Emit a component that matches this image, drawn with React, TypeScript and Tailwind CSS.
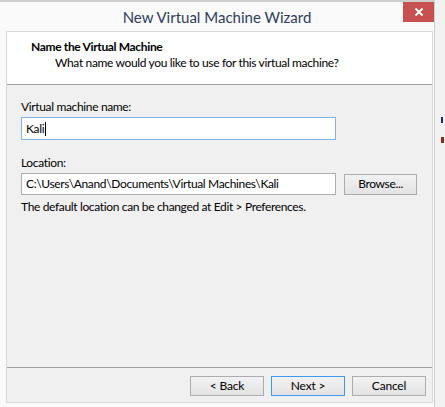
import React from "react";

const font = { fontFamily: '"Segoe UI", Lato, "Liberation Sans", sans-serif' };

function Btn({ children, primary }: { children: React.ReactNode; primary?: boolean }) {
  return (
    <div
      className={
        "flex h-[20px] w-[74px] items-center justify-center border text-[12px] tracking-[-0.2px] text-[#000] bg-gradient-to-b from-[#f2f2f2] to-[#e3e3e3] " +
        (primary ? "border-[#3c9bf0]" : "border-[#acacac]")
      }
    >
      {children}
    </div>
  );
}

export default function App() {
  return (
    <div className="relative flex h-[407px] w-[445px] overflow-hidden bg-[#f2f2f2]" style={font}>
      <div className="flex h-full w-[435px] flex-col border-r border-t-2 border-[#cfcfcf] bg-[#fafafa]">
        <div className="grid h-[29px] grid-cols-[1fr_auto_1fr] items-start">
          <div />
          <div className="pt-[5px] text-[15px] leading-[20px] text-[#2e3e5c]">New Virtual Machine Wizard</div>
          <div className="flex justify-end">
            <div className="flex h-[20px] w-[31px] items-center justify-center bg-[#c75050]">
              <svg width="10" height="10" viewBox="0 0 10 10">
                <path d="M1.5 1.5 L8.5 8.5 M8.5 1.5 L1.5 8.5" stroke="#fff" strokeWidth="1.8" />
              </svg>
            </div>
          </div>
        </div>
        <div className="mb-[4px] ml-[6px] mr-[1px] flex flex-1 flex-col border border-[#d9d9d9] bg-[#f0f0f0] text-[12px] tracking-[-0.35px]">
          <div className="h-[53px] border-b border-[#a0a0a0] bg-white pl-[24px] pt-[7px]">
            <div className="text-[12px] font-bold leading-[15px] text-black">Name the Virtual Machine</div>
            <div className="pl-[24px] pt-[1px] text-[12px] leading-[15px] text-[#000]">
              What name would you like to use for this virtual machine?
            </div>
          </div>
          <div className="flex flex-1 flex-col px-[14px] pt-[14px]">
            <div className="leading-[15px] text-black">Virtual machine name:</div>
            <div className="mt-[3px] flex h-[23px] w-[315px] items-center border border-[#7eb4ea] bg-white pl-[4px] text-black">
              Kali<span className="ml-[1px] inline-block h-[14px] w-[1px] bg-black" />
            </div>
            <div className="mt-[15px] leading-[15px] text-black">Location:</div>
            <div className="mt-[3px] flex items-center">
              <div className="flex h-[22px] w-[315px] items-center border border-[#abadb3] bg-white pl-[4px] text-black">
                C:\Users\Anand\Documents\Virtual Machines\Kali
              </div>
              <div className="ml-[8px] flex h-[21px] w-[73px] items-center justify-center border border-[#acacac] bg-gradient-to-b from-[#f2f2f2] to-[#e3e3e3] text-black">
                Browse...
              </div>
            </div>
            <div className="mt-[4px] leading-[15px] text-black">
              The default location can be changed at Edit &gt; Preferences.
            </div>
          </div>
          <div className="flex h-[35px] items-start justify-end gap-[7px] border-t border-[#a0a0a0] pr-[6px] pt-[8px]">
            <Btn>&lt; Back</Btn>
            <Btn primary>Next &gt;</Btn>
            <Btn>Cancel</Btn>
          </div>
        </div>
      </div>
      <div className="relative flex-1">
        <div className="absolute left-[6px] top-[117px] h-[6px] w-[2px] bg-[#1a2a6a]" />
        <div className="absolute left-[6px] top-[137px] h-[6px] w-[3px] bg-[#8a2a1a]" />
      </div>
    </div>
  );
}
